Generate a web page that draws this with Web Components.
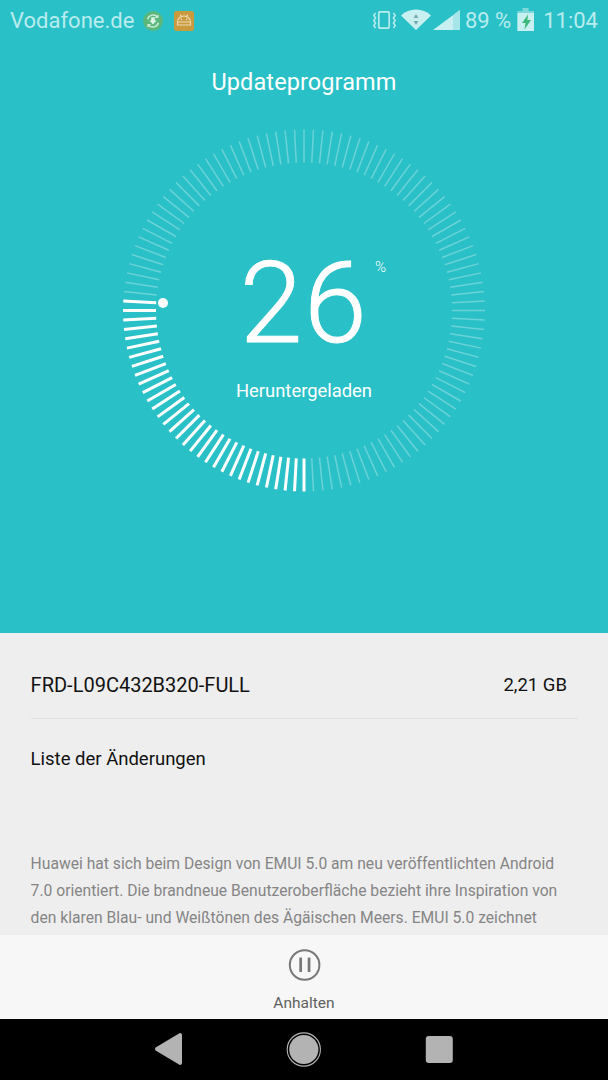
<!DOCTYPE html>
<html lang="de"><head><meta charset="utf-8"><title>Updateprogramm</title>
<style>
html,body{margin:0;padding:0;background:#000}
body{width:608px;height:1080px;overflow:hidden;font-family:Roboto,"Liberation Sans",sans-serif}
</style></head><body>
<update-screen>
  <status-bar slot="hero"></status-bar>
  <page-title slot="hero">Updateprogramm</page-title>
  <progress-dial slot="hero" value="26" label="Heruntergeladen"></progress-dial>
  <package-row slot="panel" name="FRD-L09C432B320-FULL" size="2,21 GB"></package-row>
  <change-log slot="panel" heading="Liste der Änderungen">Huawei hat sich beim Design von EMUI 5.0 am neu veröffentlichten Android<br>7.0 orientiert. Die brandneue Benutzeroberfläche bezieht ihre Inspiration von<br>den klaren Blau- und Weißtönen des Ägäischen Meers. EMUI 5.0 zeichnet</change-log>
  <pause-action slot="action">Anhalten</pause-action>
  <nav-bar slot="nav"></nav-bar>
</update-screen>
<script>
function def(name, css, html, init){
  customElements.define(name, class extends HTMLElement{
    constructor(){super();const r=this.attachShadow({mode:'open'});
      r.innerHTML='<style>'+css+'</style>'+(typeof html==='function'?html(this):html);}
    connectedCallback(){const r=this.shadowRoot;
      if(typeof this._h==='undefined'){this._h=1;if(init)init.call(this,r);}}
  });
}
def('update-screen',
 `:host{display:flex;flex-direction:column;width:608px;height:1080px}
  .hero{height:633px;background:#2ac0c7;flex:none}
  .panel{flex:1;min-height:0;background:#eee;overflow:hidden}
  .action{flex:none}.nav{flex:none}`,
 `<div class="hero"><slot name="hero"></slot></div>
  <div class="panel"><slot name="panel"></slot></div>
  <div class="action"><slot name="action"></slot></div>
  <div class="nav"><slot name="nav"></slot></div>`);
def('status-bar',
 `:host{display:flex;align-items:center;height:42px;padding:0 10px 0 10px;color:#b9ecee;font:400 22px/1 Roboto,sans-serif}
  .carrier{margin-right:9px}
  .gap{flex:1}
  svg{display:block;flex:none}
  .pct{margin:0 6px 0 5px}
  .time{margin-left:8px}`,
 `<span class="carrier">Vodafone.de</span>
  <svg width="20" height="20" viewBox="0 0 20 20" style="margin-right:11px"><circle cx="10" cy="10" r="10" fill="#5bb87c"/><path d="M4.6 8.2A5.8 5.8 0 0 1 14.4 5.8M15.4 11.8A5.8 5.8 0 0 1 5.6 14.2" fill="none" stroke="#c9ecd6" stroke-width="1.5"/><path d="M15.6 3.2v3.8h-3.8zM4.4 16.8V13h3.8z" fill="#c9ecd6"/><path d="M8.2 6.2h3.6v3.4h1.8L10 13.4 6.4 9.6h1.8z" fill="#dff5e8"/></svg>
  <svg width="20" height="20" viewBox="0 0 20 20"><rect width="20" height="20" rx="2.5" fill="#c99b3d"/><path d="M3.5 14v-3a6.5 6 0 0 1 13 0v3zM3.5 11h13M6.2 3.6l1.6 2.4M13.8 3.6l-1.6 2.4" fill="none" stroke="#ecdcb6" stroke-width="1.1"/><circle cx="7.4" cy="8.4" r=".8" fill="#ecdcb6"/><circle cx="12.6" cy="8.4" r=".8" fill="#ecdcb6"/></svg>
  <span class="gap"></span>
  <svg width="23" height="18" viewBox="0 0 23 18" style="margin:0 5px 2px 0"><rect x="5.8" y=".8" width="10.4" height="16.4" rx="1.4" fill="none" stroke="#b9ecee" stroke-width="1.7"/><path d="M2.6 2 .8 4.5l1.8 2.5-1.8 2.5L2.6 12 .8 14.5 2.6 17M20.4 2l1.8 2.5L20.4 7l1.8 2.5-1.8 2.5 1.8 2.5-1.8 2.5" fill="none" stroke="#b9ecee" stroke-width="1.5"/></svg>
  <svg width="30" height="21" viewBox="0 0 30 21" style="margin:0 2px 3px 0"><path d="M0 6.5a22 22 0 0 1 30 0L15 21z" fill="#c8f0f1"/><path d="M15 5l2.4 4h-4.8zM15 16l-2.4-4h4.8z" fill="#78a9ad"/></svg>
  <svg width="27" height="20" viewBox="0 0 27 20" style="margin-bottom:2px"><path d="M27 0v20H0z" fill="#c8f0f1"/><path d="M27 0v20h-7V5.2z" fill="#a6e6e8"/></svg>
  <span class="pct">89 %</span>
  <svg width="18" height="23" viewBox="0 0 18 23" style="margin-bottom:3px"><path d="M5.5 0h6v3H17v20H.5V3h5z" fill="#7ed7da"/><path d="M.5 5H17v18H.5z" fill="#c8f0f1"/><path d="M11 6.5 5 15h3.5L7.5 21.5 14 12h-3.6z" fill="#3cb878"/></svg>
  <span class="time">11:04</span>`);
def('page-title',
 `:host{display:block;text-align:center;color:#fff;font:400 23.5px/28px Roboto,sans-serif;padding-top:26px;height:28px;letter-spacing:.1px}`,
 `<slot></slot>`);
def('progress-dial',
 `:host{display:block;width:608px;height:400px;position:relative}
  svg{display:block;position:absolute;left:0;top:0}
  .num{position:absolute;left:0;right:0;top:143px;text-align:center;color:#fff;font:300 113px/130px Roboto,sans-serif;letter-spacing:1.5px;-webkit-text-stroke:1px #fff}
  .pct{position:absolute;left:375px;top:161px;color:#fff;font:300 15px/20px Roboto,sans-serif}
  .lab{position:absolute;left:0;right:0;top:283px;text-align:center;color:#fff;font:400 18.4px/24px Roboto,sans-serif}`,
 h=>`<svg width="608" height="400" viewBox="0 0 608 400"></svg>
  <div class="num">${h.getAttribute('value')}</div><div class="pct">%</div>
  <div class="lab">${h.getAttribute('label')}</div>`,
 function(r){
  const cx=304,cy=214.5,R=181,q=148,n=120;let s='';
  for(let i=0;i<n;i++){
    const a=Math.PI*(i*3)/180;const sx=-Math.sin(a),sy=Math.cos(a);
    const on=i<=31;
    s+=`<line x1="${(cx+sx*q).toFixed(2)}" y1="${(cy+sy*q).toFixed(2)}" x2="${(cx+sx*R).toFixed(2)}" y2="${(cy+sy*R).toFixed(2)}" stroke="#fff" stroke-width="${on?3:1.5}" stroke-opacity="${on?1:.3}"/>`;
  }
  s+=`<circle cx="163" cy="207" r="5" fill="#fff"/>`;
  r.querySelector('svg').innerHTML=s;
 });
def('package-row',
 `:host{display:flex;justify-content:space-between;align-items:center;height:85px;margin:0 30px 0 30.6px;border-bottom:1px solid #e0e0e0;color:#111;font:400 20px/24px Roboto,sans-serif}
  span{position:relative;top:9px}
  .size{font-size:18.5px;margin-right:11px}`,
 h=>`<span>${h.getAttribute('name')}</span><span class="size">${h.getAttribute('size')}</span>`);
def('change-log',
 `:host{display:block;padding:0 30.6px}
  h2{margin:28px 0 0;font:400 18.5px/24px Roboto,sans-serif;color:#111}
  p{margin:79px 0 0;font:400 15.66px/27px Roboto,sans-serif;color:#858585;white-space:nowrap}`,
 h=>`<h2>${h.getAttribute('heading')}</h2><p><slot></slot></p>`);
def('pause-action',
 `:host{display:flex;flex-direction:column;align-items:center;height:84px;background:#f7f7f7;color:#5f5f5f;font:400 15.5px/20px Roboto,sans-serif}
  svg{display:block;margin-top:12.5px}
  span{margin-top:11px}`,
 `<svg width="34" height="34" viewBox="0 0 34 34"><circle cx="17.6" cy="17" r="14.8" fill="none" stroke="#777" stroke-width="2"/><rect x="12.3" y="9.5" width="2.7" height="14.5" rx=".6" fill="#777"/><rect x="20.7" y="9.5" width="2.7" height="14.5" rx=".6" fill="#777"/></svg><span><slot></slot></span>`);
def('nav-bar',
 `:host{display:block;height:61px;background:#000}svg{display:block}`,
 `<svg width="608" height="61" viewBox="0 0 608 61">
   <path d="M182 16v28a2 2 0 0 1-3 1.6L156 31.7a2 2 0 0 1 0-3.4L179 14.4a2 2 0 0 1 3 1.6z" fill="#b3b3b3"/>
   <circle cx="303.8" cy="30.5" r="16.6" fill="none" stroke="#b3b3b3" stroke-width="1.1"/><circle cx="303.8" cy="30.5" r="14.6" fill="#b3b3b3"/>
   <rect x="425.8" y="17" width="27" height="27" rx="3" fill="#b3b3b3"/></svg>`);
</script>
</body></html>
